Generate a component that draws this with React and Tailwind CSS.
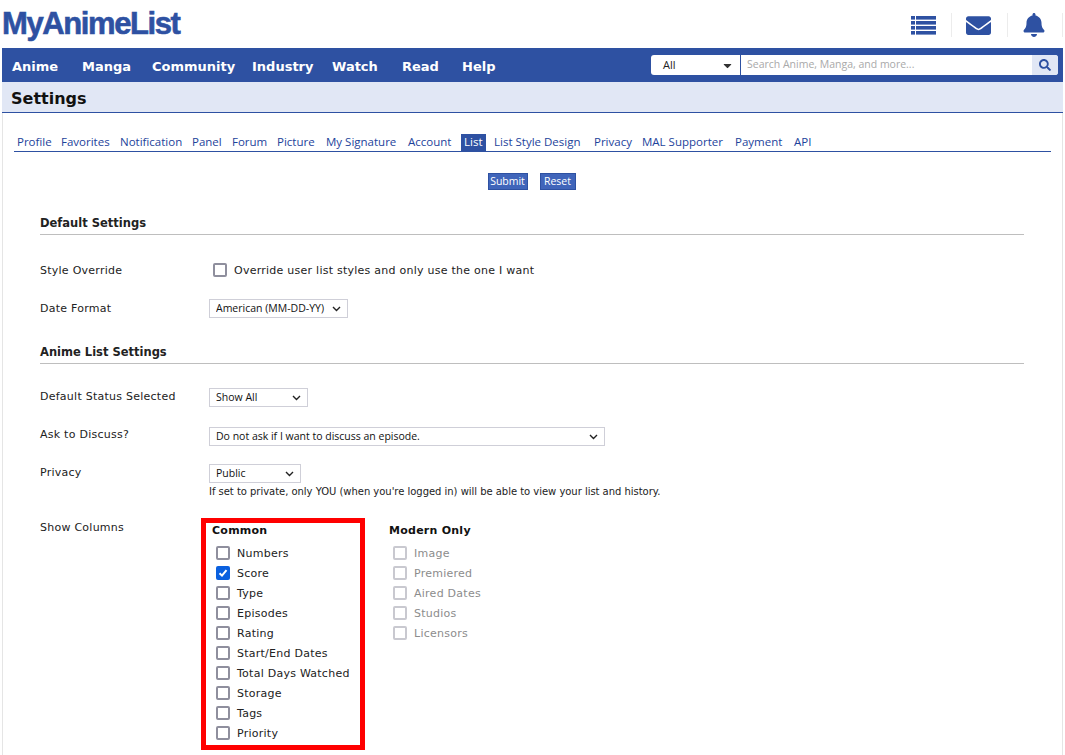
import { FaEnvelope, FaBell, FaSearch, FaCaretDown } from "react-icons/fa"

const verdana = "[font-family:'DejaVu_Sans',Verdana,sans-serif]"

const navItems = [
  { label: "Anime", width: "w-[70px]" },
  { label: "Manga", width: "w-[70px]" },
  { label: "Community", width: "w-[100px]" },
  { label: "Industry", width: "w-[80px]" },
  { label: "Watch", width: "w-[70px]" },
  { label: "Read", width: "w-[60px]" },
  { label: "Help", width: "w-[60px]" },
]

const tabs = [
  { label: "Profile", width: "w-[44px]" },
  { label: "Favorites", width: "w-[59px]" },
  { label: "Notification", width: "w-[72px]" },
  { label: "Panel", width: "w-[40px]" },
  { label: "Forum", width: "w-[45px]" },
  { label: "Picture", width: "w-[49px]" },
  { label: "My Signature", width: "w-[82px]" },
  { label: "Account", width: "w-[56px]" },
  { label: "List", width: "w-[30px]" },
  { label: "List Style Design", width: "w-[100px]" },
  { label: "Privacy", width: "w-[48px]" },
  { label: "MAL Supporter", width: "w-[93px]" },
  { label: "Payment", width: "w-[59px]" },
  { label: "API", width: "w-[30px]" },
]

const commonCols = ["Numbers", "Score", "Type", "Episodes", "Rating", "Start/End Dates", "Total Days Watched", "Storage", "Tags", "Priority"]
const modernCols = ["Image", "Premiered", "Aired Dates", "Studios", "Licensors"]

function ListIcon() {
  return (
    <svg width="25" height="19" viewBox="0 0 25 19" fill="#2e51a2">
      <rect x="0" y="0" width="4" height="3.6" />
      <rect x="5" y="0" width="20" height="3.6" />
      <rect x="0" y="5" width="4" height="3.6" />
      <rect x="5" y="5" width="20" height="3.6" />
      <rect x="0" y="10" width="4" height="3.6" />
      <rect x="5" y="10" width="20" height="3.6" />
      <rect x="0" y="15" width="4" height="3.6" />
      <rect x="5" y="15" width="20" height="3.6" />
    </svg>
  )
}

function Check({ label, checked, disabled }) {
  return (
    <div className="flex items-center h-5">
      {checked ? (
        <span className="w-[14px] h-[14px] mb-[3px] rounded-[2px] bg-[#0a60df] flex items-center justify-center">
          <svg width="10" height="10" viewBox="0 0 10 10" fill="none" stroke="#fff" strokeWidth="2">
            <path d="M1.5 5.2 4 7.6 8.5 2.2" />
          </svg>
        </span>
      ) : (
        <span className={`w-[14px] h-[14px] mb-[3px] rounded-[2px] border-2 ${disabled ? "border-[#c9c9d0]" : "border-[#8f8f9d]"}`}></span>
      )}
      <span className={`ml-[7px] ${disabled ? "text-[#8c8c8c]" : "text-[#222]"}`}>{label}</span>
    </div>
  )
}

function Select({ width, value }) {
  return (
    <div className={`relative ${width} h-[19px]`}>
      <select
        defaultValue={value}
        className="appearance-none w-full h-full bg-white border border-[#cfcfd8] pl-[6px] pt-[1px] text-[10.5px] tracking-normal text-[#111] [font-family:'Open_Sans',Tahoma,sans-serif] outline-none"
      >
        <option>{value}</option>
      </select>
      <svg className="absolute right-[7px] top-[7px]" width="9" height="6" viewBox="0 0 9 6" fill="none" stroke="#222" strokeWidth="1.4">
        <path d="M1 1 4.5 4.5 8 1" />
      </svg>
    </div>
  )
}

function Heading({ children }) {
  return (
    <div className="border-b border-[#bebebe] h-[20px] font-bold text-[11.5px] tracking-normal text-[#222] leading-[16px]">{children}</div>
  )
}

export default function App() {
  return (
    <div className={`h-[755px] overflow-hidden bg-white ${verdana} text-[11px] tracking-[0.25px] text-[#222]`}>
      <header className="h-[48px] flex items-center justify-between pl-[2px]">
        <div className="[font-family:'Liberation_Sans',sans-serif] [-webkit-text-stroke:0.6px_#2e51a2] font-bold text-[31px] tracking-[-1.4px] leading-none text-[#2e51a2] mb-[1px]">MyAnimeList</div>
        <div className="flex items-center h-[24px] mt-[2px] pr-[2px]">
          <div className="w-[56px] h-full flex items-center justify-center border-r border-[#ececec]"><ListIcon /></div>
          <div className="w-[56px] h-full flex items-center justify-center pr-[2px] border-r border-[#ececec]">
            <FaEnvelope className="text-[#2e51a2] text-[25px]" />
          </div>
          <div className="w-[55px] h-full flex items-center justify-center pr-[3px] border-r border-[#ececec]">
            <FaBell className="text-[#2e51a2] text-[24px]" />
          </div>
        </div>
      </header>

      <div className="mx-[2px] border-x border-[#e5e5e5] h-[707px]">
        <nav className="-mx-px h-[34px] bg-[#2e51a2] flex items-center justify-between pl-[10px] pr-[5px] tracking-normal">
          <div className="flex pt-[3px]">
            {navItems.map((item) => (
              <span key={item.label} className={`${item.width} font-bold text-[13px] text-white`}>{item.label}</span>
            ))}
          </div>
          <div className="flex h-[20px] rounded-[3px] overflow-hidden bg-white">
            <div className="w-[90px] flex items-center justify-between pl-[12px] pr-[6px] border-r border-[#2e51a2] text-[11px] text-[#222] [font-family:'Open_Sans',sans-serif]">
              All
              <FaCaretDown className="text-[#333] text-[13px]" />
            </div>
            <div className="w-[291px] pl-[6px] flex items-center text-[10.5px] text-[#a9a9a9] [font-family:'Open_Sans',sans-serif]">Search Anime, Manga, and more...</div>
            <div className="w-[26px] bg-[#e1e7f5] flex items-center justify-center">
              <FaSearch className="text-[#2e51a2] text-[12px]" />
            </div>
          </div>
        </nav>

        <div className="-mx-px h-[31px] bg-[#e1e7f5] border-b border-[#2e51a2] pl-[9px] pt-[3px] flex items-center tracking-normal">
          <h1 className="font-bold text-[16px] text-[#111]">Settings</h1>
        </div>

        <div className="pl-[11px] pr-[11px] pt-[20px]">
          <div className="flex items-end h-[19px] border-b border-[#2e51a2] text-[11.5px] tracking-normal text-[#1d439b] [font-family:'Open_Sans',Tahoma,sans-serif]">
            {tabs.map((tab) => (
              <div key={tab.label} className={`${tab.width} h-[18px] shrink-0`}>
                <span className={`inline-block h-[18px] leading-[16px] px-[3px] whitespace-nowrap ${tab.label === "List" ? "bg-[#2e51a2] text-white" : ""}`}>{tab.label}</span>
              </div>
            ))}
          </div>

          <div className="flex justify-center gap-[12px] mt-[21px] pr-[2px] text-[10.5px] tracking-normal text-white [font-family:'Open_Sans',Tahoma,sans-serif]">
            <button className="h-[17px] w-[40px] bg-[#4065ba] border border-[#2e51a2] leading-none">Submit</button>
            <button className="h-[17px] w-[36px] bg-[#4065ba] border border-[#2e51a2] leading-none">Reset</button>
          </div>

          <div className="ml-[26px] mr-[27px]">
            <div className="mt-[25px]"><Heading>Default Settings</Heading></div>

            <div className="flex items-center mt-[26px] h-[20px]">
              <span className="w-[173px]">Style Override</span>
              <Check label="Override user list styles and only use the one I want" />
            </div>
            <div className="flex items-center mt-[18px]">
              <span className="w-[169px] pt-[2px]">Date Format</span>
              <Select width="w-[139px]" value="American (MM-DD-YY)" />
            </div>

            <div className="mt-[26px]"><Heading>Anime List Settings</Heading></div>

            <div className="flex mt-[24px]">
              <span className="w-[169px] pt-[1px]">Default Status Selected</span>
              <Select width="w-[99px]" value="Show All" />
            </div>
            <div className="flex mt-[20px]">
              <span className="w-[169px]">Ask to Discuss?</span>
              <Select width="w-[396px]" value="Do not ask if I want to discuss an episode." />
            </div>
            <div className="flex mt-[18px]">
              <span className="w-[169px] pt-[1px]">Privacy</span>
              <div>
                <Select width="w-[92px]" value="Public" />
                <p className="text-[10px] tracking-[-0.03px] mt-[1px]">If set to private, only YOU (when you're logged in) will be able to view your list and history.</p>
              </div>
            </div>

            <div className="flex mt-[19px]">
              <span className="w-[161px] pt-[2px]">Show Columns</span>
              <div className="w-[164px] h-[232px] border-[5px] border-[#ff0000] pl-[6px]">
                <div className="font-bold text-[11px] text-[#111] h-[15px]">Common</div>
                <div className="pl-[4px] mt-[6px]">
                  {commonCols.map((c) => <Check key={c} label={c} checked={c === "Score"} />)}
                </div>
              </div>
              <div className="ml-[24px] pt-[5px]">
                <div className="font-bold text-[11px] text-[#111] h-[15px]">Modern Only</div>
                <div className="pl-[4px] mt-[6px]">
                  {modernCols.map((c) => <Check key={c} label={c} disabled />)}
                </div>
              </div>
            </div>
          </div>
        </div>
      </div>
    </div>
  )
}
